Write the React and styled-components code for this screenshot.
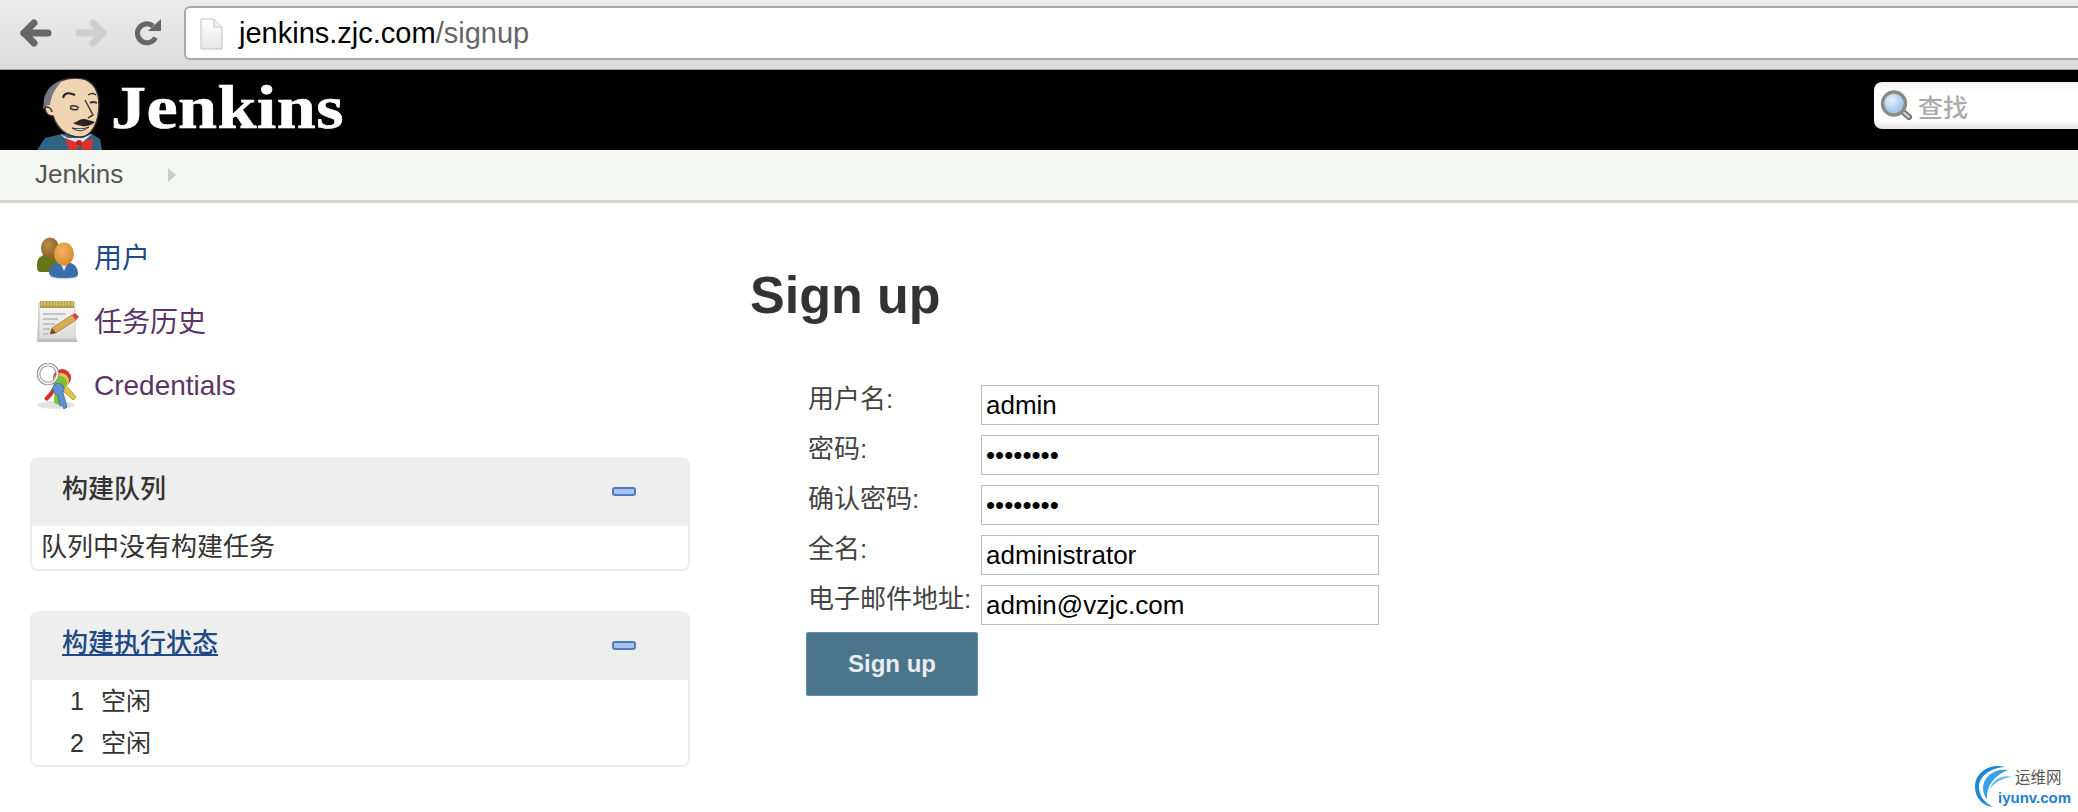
import styled, { createGlobalStyle } from 'styled-components'

const SANS = `"Liberation Sans", "Noto Sans CJK SC", sans-serif`

const GlobalStyle = createGlobalStyle`
    html, body {
        margin: 0;
        padding: 0;
        height: 812px;
        overflow: hidden;
        background: #fff;
        font-family: ${SANS};
        color: #333;
    }
`

const Toolbar = styled.div`
    display: flex;
    align-items: center;
    height: 70px;
    box-sizing: border-box;
    padding: 6px 0 10px 20px;
    background: linear-gradient(#ececec, #dcdcdc);
    border-bottom: 1px solid #9a9a9a;
    overflow: hidden;
`

const NavIcon = styled.svg`
    flex: none;
    margin-right: ${props => props.$gap}px;
`

const UrlBar = styled.div`
    flex: none;
    display: flex;
    align-items: center;
    width: 2000px;
    height: 54px;
    box-sizing: border-box;
    padding: 2px 0 0 14px;
    background: #fff;
    border: 2px solid #a8a8a8;
    border-radius: 6px;
    font-size: 29px;
    color: #000;
`

const UrlPath = styled.span`
    color: #666;
`

const PageIcon = styled.svg`
    flex: none;
    margin-right: 16px;
`

const Header = styled.div`
    display: flex;
    align-items: flex-end;
    justify-content: space-between;
    height: 80px;
    padding-left: 36px;
    background: #000;
    overflow: hidden;
`

const Brand = styled.div`
    display: flex;
    align-items: flex-end;
`

const BrandName = styled.span`
    font-family: "Liberation Serif", serif;
    font-weight: bold;
    font-size: 62px;
    letter-spacing: 0.4px;
    line-height: 80px;
    height: 80px;
    color: #fff;
    margin-left: 9px;
    -webkit-text-stroke: 0.7px #fff;
    transform: scaleX(1.13);
    transform-origin: left center;
    position: relative;
    top: -3px;
`

const SearchBox = styled.div`
    display: flex;
    align-items: center;
    align-self: flex-start;
    width: 204px;
    height: 47px;
    margin-top: 12px;
    box-sizing: border-box;
    padding-left: 6px;
    background: linear-gradient(#f1f1f1, #fff 22%, #fff 80%, #e4e4e4);
    border-radius: 8px 0 0 8px;
    font-size: 25px;
    font-weight: 500;
    color: #aaa;
`

const SearchIcon = styled.svg`
    flex: none;
    margin-right: 5px;
`

const Breadcrumb = styled.div`
    display: flex;
    align-items: center;
    height: 53px;
    box-sizing: border-box;
    padding: 0 0 1px 35px;
    background: #f5f8f2;
    border-bottom: 3px solid #d3d7cf;
    font-size: 26px;
    color: #555;
`

const CrumbArrow = styled.span`
    width: 0;
    height: 0;
    margin-left: 45px;
    border-left: 8px solid #c9c9c9;
    border-top: 7px solid transparent;
    border-bottom: 7px solid transparent;
`

const Page = styled.div`
    display: flex;
`

const Sidebar = styled.div`
    flex: none;
    width: 660px;
    margin-left: 30px;
    padding-top: 23px;
`

const TaskRow = styled.div`
    display: flex;
    align-items: center;
    height: 64px;
    padding-left: 6px;
    font-size: 28px;
    color: ${props => (props.$visited ? '#5c3566' : '#204a87')};
`

const TaskLabel = styled.span`
    position: relative;
    top: ${props => (props.$cjk ? -2 : 0)}px;
`

const TaskIcon = styled.svg`
    flex: none;
    margin-right: 15px;
`

const Panel = styled.div`
    margin-top: ${props => props.$top}px;
    border: 2px solid #eee;
    border-radius: 8px;
    overflow: hidden;
    background: #fff;
`

const PanelHead = styled.div`
    display: flex;
    align-items: center;
    justify-content: space-between;
    height: 67px;
    box-sizing: border-box;
    padding: 0 52px 12px 30px;
    background: #eee;
    font-size: 26px;
    font-weight: 500;
    color: ${props => (props.$link ? '#204a87' : '#333')};
    text-decoration: ${props => (props.$link ? 'underline' : 'none')};
`

const Collapse = styled.span`
    width: 24px;
    height: 9px;
    margin-top: 10px;
    box-sizing: border-box;
    background: #a9c4e8;
    border: 2px solid #4f7cbc;
    border-radius: 3px;
`

const QueueText = styled.div`
    height: 43px;
    line-height: 43px;
    padding-left: 9px;
    font-size: 26px;
`

const ExecutorList = styled.div`
    padding-bottom: 1px;
`

const ExecutorRow = styled.div`
    display: flex;
    height: 42px;
    line-height: 42px;
    font-size: 25px;
`

const ExecutorNum = styled.span`
    width: 52px;
    text-align: right;
    margin-right: 17px;
`

const Main = styled.div`
    margin-left: 60px;
    padding-top: 62px;
`

const Title = styled.h1`
    margin: 0 0 60px;
    font-size: 52px;
    line-height: 60px;
    font-weight: bold;
    color: #333;
`

const SignupForm = styled.div`
    display: grid;
    grid-template-columns: 175px 398px;
    grid-auto-rows: 40px;
    row-gap: 10px;
    margin-left: 56px;
`

const FieldLabel = styled.label`
    padding: 1px 0 0 2px;
    font-size: 26px;
    line-height: 27px;
    white-space: nowrap;
    color: #444;
`

const FieldInput = styled.input`
    width: 100%;
    height: 40px;
    box-sizing: border-box;
    padding: 0 4px;
    border: 1.5px solid #bdbdbd;
    border-radius: 0;
    outline: none;
    font-family: ${SANS};
    font-size: 26px;
    color: #000;
`

const SubmitButton = styled.button`
    width: 172px;
    height: 64px;
    margin-top: -3px;
    background: #4b758b;
    border: 1px solid #5d8ba3;
    border-radius: 2px;
    font-family: ${SANS};
    font-size: 24px;
    font-weight: bold;
    color: #e8edf0;
`

const Watermark = styled.div`
    position: absolute;
    left: 1975px;
    top: 765px;
    width: 100px;
    height: 44px;
`

const MarkName = styled.span`
    position: absolute;
    left: 40px;
    top: 3px;
    font-size: 15.5px;
    line-height: 20px;
    color: #555;
`

const MarkDomain = styled.span`
    position: absolute;
    left: 23px;
    top: 23px;
    font-size: 15px;
    line-height: 20px;
    font-weight: bold;
    color: #1f80cf;
`

function BackIcon({ color, flip, gap }) {
    return (
        <NavIcon $gap={gap} width="32" height="28" viewBox="0 0 32 28">
            <g transform={flip ? 'translate(32 0) scale(-1 1)' : undefined} fill="none" stroke={color} strokeWidth="7" strokeLinecap="round" strokeLinejoin="round">
                <path d="M4 14H28" />
                <path d="M14 4L4 14L14 24" />
            </g>
        </NavIcon>
    )
}

function ReloadIcon() {
    return (
        <NavIcon $gap={22} width="28" height="28" viewBox="0 0 28 28">
            <path d="M21.5 18.5A9.5 9.5 0 1 1 19 7" fill="none" stroke="#666" strokeWidth="5" />
            <path d="M14 12H27V0Z" fill="#666" />
        </NavIcon>
    )
}

function FileIcon() {
    return (
        <PageIcon width="23" height="32" viewBox="0 0 23 32">
            <defs>
                <linearGradient id="paper" x1="0" y1="0" x2="0" y2="1">
                    <stop offset="0" stopColor="#fff" />
                    <stop offset="1" stopColor="#e6e6e6" />
                </linearGradient>
            </defs>
            <path d="M1 1H14L22 9V31H1Z" fill="url(#paper)" stroke="#c2c2c2" />
            <path d="M14 1V9H22" fill="#f4f4f4" stroke="#c2c2c2" />
        </PageIcon>
    )
}

function Butler() {
    return (
        <svg width="66" height="72" viewBox="0 0 66 72" style={{ flex: 'none' }}>
            <path d="M1 72L9 60L26 56H56L64 61L66 72Z" fill="#2f6484" />
            <path d="M24 56L40 70L56 56L46 60H32Z" fill="#dfe4e6" />
            <path d="M17 38C8 38 7 26 12 25L14 12C20 3 30 0 40 0C54 0 63 9 63 27C63 44 56 59 44 59C30 59 21 50 17 38Z" fill="#f0d5b3" stroke="#3b3230" strokeWidth="1.5" />
            <path d="M27 2C16 5 10 12 8 21L7 32C9 28 11 27 14 27C15 18 19 10 27 2Z" fill="#77777c" />
            <path d="M9 30C11 28 15 29 16 34" fill="none" stroke="#3b3230" strokeWidth="1.5" />
            <path d="M27 20C28 15 32 14 39 17" fill="none" stroke="#222" strokeWidth="2" />
            <path d="M52 17C55 15 58 15 60 17" fill="none" stroke="#333" strokeWidth="1.5" />
            <path d="M34 29Q38 26 43 30M34 30Q38 33 42 31" fill="none" stroke="#333" strokeWidth="1.6" />
            <path d="M54 25Q57 23 61 25" fill="none" stroke="#333" strokeWidth="1.8" />
            <path d="M49 22L57 37L52 40" fill="none" stroke="#4a3a32" strokeWidth="1.5" />
            <path d="M37 45C41 44 44 41 47 41C51 41 55 43 59 44C55 48 49 49 46 48C43 47 40 47 37 45Z" fill="#2c2420" />
            <path d="M36 50Q45 56 53 49Q46 52 36 50Z" fill="#fff" stroke="#3b3230" />
            <path d="M29 60L42 65L41 72H33Z" fill="#d9312b" />
            <path d="M57 60L44 65L46 72H56Z" fill="#d9312b" />
            <circle cx="43" cy="65" r="3" fill="#b8221f" />
        </svg>
    )
}

function Magnifier() {
    return (
        <SearchIcon width="33" height="31" viewBox="0 0 33 31">
            <defs>
                <radialGradient id="lens" cx="0.4" cy="0.35" r="0.7">
                    <stop offset="0" stopColor="#e6f0fb" />
                    <stop offset="1" stopColor="#8db8e8" />
                </radialGradient>
            </defs>
            <path d="M22 21L29 27" stroke="#777" strokeWidth="6" strokeLinecap="round" />
            <path d="M23 22L29 27" stroke="#ddd" strokeWidth="2" strokeLinecap="round" />
            <circle cx="14" cy="13.5" r="11.5" fill="url(#lens)" stroke="#8a8a86" strokeWidth="3.4" />
        </SearchIcon>
    )
}

function UsersIcon() {
    return (
        <TaskIcon width="43" height="43" viewBox="0 0 43 43">
            <defs>
                <radialGradient id="headA" cx="0.4" cy="0.35" r="0.7">
                    <stop offset="0" stopColor="#b98a48" />
                    <stop offset="1" stopColor="#8a5c20" />
                </radialGradient>
                <radialGradient id="headB" cx="0.4" cy="0.35" r="0.7">
                    <stop offset="0" stopColor="#f2b562" />
                    <stop offset="1" stopColor="#d48a2a" />
                </radialGradient>
            </defs>
            <ellipse cx="28" cy="40" rx="14" ry="2.5" fill="#ddd" />
            <path d="M1 27C1 20 7 17 14 17C21 17 26 20 26 27V35H4C1 35 1 31 1 27Z" fill="#66751c" />
            <ellipse cx="14" cy="11" rx="9" ry="10.5" fill="url(#headA)" />
            <path d="M13 36C13 28 19 25 28 25C37 25 42 29 42 37C42 40 38 41 28 41C17 41 13 39 13 36Z" fill="#3a6ea8" />
            <path d="M24 25L28 34L32 25Z" fill="#dfe8f2" />
            <ellipse cx="28" cy="17" rx="10" ry="11.5" fill="url(#headB)" />
        </TaskIcon>
    )
}

function NotepadIcon() {
    return (
        <TaskIcon width="43" height="44" viewBox="0 0 43 44">
            <defs>
                <linearGradient id="pad" x1="0" y1="0" x2="0" y2="1">
                    <stop offset="0" stopColor="#fafafa" />
                    <stop offset="1" stopColor="#dcdcdc" />
                </linearGradient>
            </defs>
            <path d="M3 3H38L39 36L42 42H1Z" fill="#bdbdbd" />
            <rect x="3" y="3" width="36" height="36" fill="url(#pad)" stroke="#c8c8c8" />
            <rect x="4" y="1" width="34" height="7" fill="#b49c45" />
            <path d="M6 1V6M9 1V6M12 1V6M15 1V6M18 1V6M21 1V6M24 1V6M27 1V6M30 1V6M33 1V6M36 1V6" stroke="#e3d79a" strokeWidth="1" />
            <path d="M7 14H30M7 19H22M7 24H19M7 29H14M7 34H12" stroke="#c3c3c3" strokeWidth="2" />
            <path d="M14 34L16 28L36 15L40 20L20 33Z" fill="#d9a95a" stroke="#a87d35" strokeWidth="0.8" />
            <path d="M14 34L16 28L20 33Z" fill="#6b5531" />
            <path d="M36 15L40 20L43 17L39 13Z" fill="#e0404a" />
        </TaskIcon>
    )
}

function KeysIcon() {
    return (
        <TaskIcon width="43" height="46" viewBox="0 0 43 46">
            <ellipse cx="20" cy="42" rx="19" ry="4" fill="#e4e4e4" />
            <path d="M19 16C29 20 35 28 40 34L37 37C30 30 24 26 18 20Z" fill="#e5c44a" stroke="#a88b26" strokeWidth="0.8" />
            <path d="M24 12C18 22 14 30 11 32L8 36L11 38L16 33L22 22Z" fill="#d8302c" />
            <path d="M21 14C19 24 18 32 18 40L23 42L25 38L24 25Z" fill="#7cc234" />
            <ellipse cx="26" cy="15" rx="9" ry="9" fill="#d8302c" />
            <ellipse cx="25" cy="18" rx="8" ry="8" fill="#e5c44a" />
            <ellipse cx="24" cy="20" rx="7" ry="7" fill="#7cc234" />
            <path d="M17 26C17 21 21 19 25 21C29 23 28 27 27 30L31 44L28 46L26 42L24 43L22 32C18 31 17 29 17 26Z" fill="#5d93cf" stroke="#38689e" strokeWidth="0.8" />
            <circle cx="12" cy="11" r="9.5" fill="none" stroke="#8c8c8c" strokeWidth="3.6" />
            <circle cx="12" cy="11" r="9.5" fill="none" stroke="#efefef" strokeWidth="1.8" />
        </TaskIcon>
    )
}

function Swirl() {
    return (
        <svg width="40" height="42" viewBox="0 0 40 42">
            <path d="M30 2C14 -2 0 8 0 22C0 33 8 41 18 42C10 38 4 31 4 22C4 12 14 3 30 2Z" fill="#1f86d6" />
            <path d="M33 5C20 3 9 11 8 22C8 27 9 31 12 34C11 22 19 10 33 5Z" fill="#37a0e6" />
            <path d="M37 12C27 9 17 15 15 24C20 17 28 13 37 12Z" fill="#6dbcee" />
        </svg>
    )
}

const fields = [
    { label: '用户名:', value: 'admin', type: 'text' },
    { label: '密码:', value: '12345678', type: 'password' },
    { label: '确认密码:', value: '12345678', type: 'password' },
    { label: '全名:', value: 'administrator', type: 'text' },
    { label: '电子邮件地址:', value: 'admin@vzjc.com', type: 'text' },
]

function FieldRow({ label, value, type }) {
    return (
        <>
            <FieldLabel>{label}</FieldLabel>
            <FieldInput type={type} defaultValue={value} readOnly />
        </>
    )
}

function App() {
    return (
        <>
            <GlobalStyle />
            <Toolbar>
                <BackIcon color="#666" gap={23} />
                <BackIcon color="#cfcfcf" flip gap={27} />
                <ReloadIcon />
                <UrlBar>
                    <FileIcon />
                    jenkins.zjc.com<UrlPath>/signup</UrlPath>
                </UrlBar>
            </Toolbar>
            <Header>
                <Brand>
                    <Butler />
                    <BrandName>Jenkins</BrandName>
                </Brand>
                <SearchBox>
                    <Magnifier />
                    查找
                </SearchBox>
            </Header>
            <Breadcrumb>
                Jenkins
                <CrumbArrow />
            </Breadcrumb>
            <Page>
                <Sidebar>
                    <TaskRow>
                        <UsersIcon />
                        <TaskLabel $cjk>用户</TaskLabel>
                    </TaskRow>
                    <TaskRow $visited>
                        <NotepadIcon />
                        <TaskLabel $cjk>任务历史</TaskLabel>
                    </TaskRow>
                    <TaskRow $visited>
                        <KeysIcon />
                        <TaskLabel>Credentials</TaskLabel>
                    </TaskRow>
                    <Panel $top={39}>
                        <PanelHead>
                            构建队列
                            <Collapse />
                        </PanelHead>
                        <QueueText>队列中没有构建任务</QueueText>
                    </Panel>
                    <Panel $top={40}>
                        <PanelHead $link>
                            构建执行状态
                            <Collapse />
                        </PanelHead>
                        <ExecutorList>
                            <ExecutorRow>
                                <ExecutorNum>1</ExecutorNum>
                                空闲
                            </ExecutorRow>
                            <ExecutorRow>
                                <ExecutorNum>2</ExecutorNum>
                                空闲
                            </ExecutorRow>
                        </ExecutorList>
                    </Panel>
                </Sidebar>
                <Main>
                    <Title>Sign up</Title>
                    <SignupForm>
                        {fields.map(field => (
                            <FieldRow key={field.label} {...field} />
                        ))}
                        <SubmitButton>Sign up</SubmitButton>
                    </SignupForm>
                </Main>
            </Page>
            <Watermark>
                <Swirl />
                <MarkName>运维网</MarkName>
                <MarkDomain>iyunv.com</MarkDomain>
            </Watermark>
        </>
    )
}

export default App
